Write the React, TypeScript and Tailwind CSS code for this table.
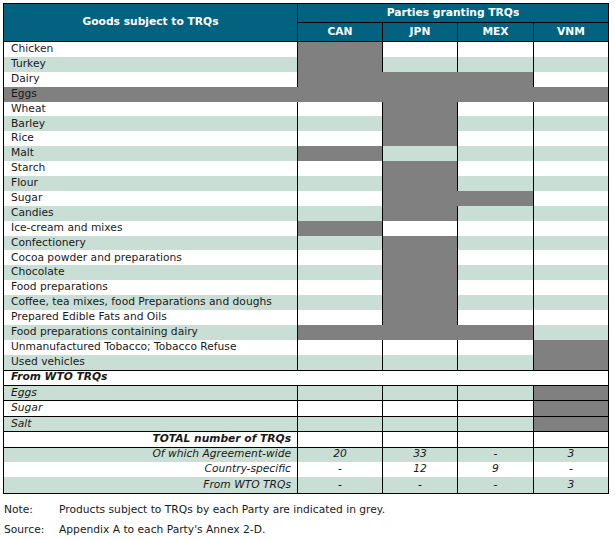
import React from 'react'

type Row = { label: string; grey: number[]; labelGrey?: boolean }

// order of parties: CAN, JPN, MEX, VNM
const goods: Row[] = [
  { label: 'Chicken', grey: [1, 0, 0, 0] },
  { label: 'Turkey', grey: [1, 0, 0, 0] },
  { label: 'Dairy', grey: [1, 1, 1, 0] },
  { label: 'Eggs', grey: [1, 1, 1, 1], labelGrey: true },
  { label: 'Wheat', grey: [0, 1, 0, 0] },
  { label: 'Barley', grey: [0, 1, 0, 0] },
  { label: 'Rice', grey: [0, 1, 0, 0] },
  { label: 'Malt', grey: [1, 0, 0, 0] },
  { label: 'Starch', grey: [0, 1, 0, 0] },
  { label: 'Flour', grey: [0, 1, 0, 0] },
  { label: 'Sugar', grey: [0, 1, 1, 0] },
  { label: 'Candies', grey: [0, 1, 0, 0] },
  { label: 'Ice-cream and mixes', grey: [1, 0, 0, 0] },
  { label: 'Confectionery', grey: [0, 1, 0, 0] },
  { label: 'Cocoa powder and preparations', grey: [0, 1, 0, 0] },
  { label: 'Chocolate', grey: [0, 1, 0, 0] },
  { label: 'Food preparations', grey: [0, 1, 0, 0] },
  { label: 'Coffee, tea mixes, food Preparations and doughs', grey: [0, 1, 0, 0] },
  { label: 'Prepared Edible Fats and Oils', grey: [0, 1, 0, 0] },
  { label: 'Food preparations containing dairy', grey: [1, 1, 1, 0] },
  { label: 'Unmanufactured Tobacco; Tobacco Refuse', grey: [0, 0, 0, 1] },
  { label: 'Used vehicles', grey: [0, 0, 0, 1] },
]

const wto = ['Eggs', 'Sugar', 'Salt']

const totals = [
  { label: 'Of which Agreement-wide', values: ['20', '33', '-', '3'], green: true, line: true },
  { label: 'Country-specific', values: ['-', '12', '9', '-'], green: false, line: false },
  { label: 'From WTO TRQs', values: ['-', '-', '-', '3'], green: true, line: false },
]

const cols = 'grid grid-cols-[293px_85px_75px_76px_75px]'

function App() {
  return (
    <div className="w-[615px] h-[540px] bg-white font-['DejaVu_Sans',Verdana,sans-serif] text-[10.7px] text-[#1a1a1a] pt-[3px] pl-[3px]">
      <div className="w-[606px] border border-black">
        {/* Header */}
        <div className="flex bg-[#02627f] text-white font-bold border-b border-black">
          <div className="w-[293px] h-[37px] flex items-center justify-center">Goods subject to TRQs</div>
          <div className="flex-1 flex flex-col border-l border-black">
            <div className="h-[18px] flex items-center justify-center">Parties granting TRQs</div>
            <div className="h-[19px] grid grid-cols-[84px_75px_76px_75px] border-t border-black">
              <div className="flex items-center justify-center">CAN</div>
              <div className="flex items-center justify-center border-l border-black">JPN</div>
              <div className="flex items-center justify-center border-l border-black">MEX</div>
              <div className="flex items-center justify-center border-l border-black">VNM</div>
            </div>
          </div>
        </div>

        {/* Goods rows */}
        {goods.map((r, i) => {
          const bg = i % 2 === 1 ? 'bg-[#c9ded5]' : 'bg-white'
          return (
            <div key={r.label} className={`${cols} h-[14.9px] leading-none`}>
              <div className={`flex items-center pl-[7px] whitespace-nowrap ${r.labelGrey ? 'bg-[#808080]' : bg}`}>
                {r.label}
              </div>
              {r.grey.map((g, j) => {
                const leftGrey = j === 0 ? !!r.labelGrey : r.grey[j - 1] === 1
                const border = g && leftGrey ? 'border-[#808080]' : 'border-black'
                return <div key={j} className={`border-l ${border} ${g ? 'bg-[#808080]' : bg}`} />
              })}
            </div>
          )
        })}

        {/* From WTO TRQs */}
        <div className="h-[15.4px] border-t border-black flex items-center pl-[7px] font-bold italic leading-none">
          From WTO TRQs
        </div>
        {wto.map((w, i) => {
          const bg = i % 2 === 0 ? 'bg-[#c9ded5]' : 'bg-white'
          return (
            <div key={w} className={`${cols} h-[15.4px] border-t border-black leading-none`}>
              <div className={`flex items-center pl-[7px] italic ${bg}`}>{w}</div>
              <div className={`border-l border-black ${bg}`} />
              <div className={`border-l border-black ${bg}`} />
              <div className={`border-l border-black ${bg}`} />
              <div className="border-l border-black bg-[#808080]" />
            </div>
          )
        })}

        {/* Totals */}
        <div className={`${cols} h-[15.4px] border-t border-black leading-none bg-white`}>
          <div className="flex items-center justify-end pr-[6px] font-bold italic">TOTAL number of TRQs</div>
          <div className="border-l border-black" />
          <div className="border-l border-black" />
          <div className="border-l border-black" />
          <div className="border-l border-black" />
        </div>
        {totals.map((t) => (
          <div
            key={t.label}
            className={`${cols} h-[15.4px] leading-none italic ${t.green ? 'bg-[#c9ded5]' : 'bg-white'} ${
              t.line ? 'border-t border-black' : ''
            }`}
          >
            <div className="flex items-center justify-end pr-[6px]">{t.label}</div>
            {t.values.map((v, j) => (
              <div key={j} className="border-l border-black flex items-center justify-center">
                {v}
              </div>
            ))}
          </div>
        ))}
      </div>

      {/* Notes */}
      <div className="mt-[6px] leading-[20px]">
        <div className="flex">
          <div className="w-[56px] pl-[1px]">Note:</div>
          <div>Products subject to TRQs by each Party are indicated in grey.</div>
        </div>
        <div className="flex">
          <div className="w-[56px] pl-[1px]">Source:</div>
          <div>Appendix A to each Party's Annex 2-D.</div>
        </div>
      </div>
    </div>
  )
}

export default App
